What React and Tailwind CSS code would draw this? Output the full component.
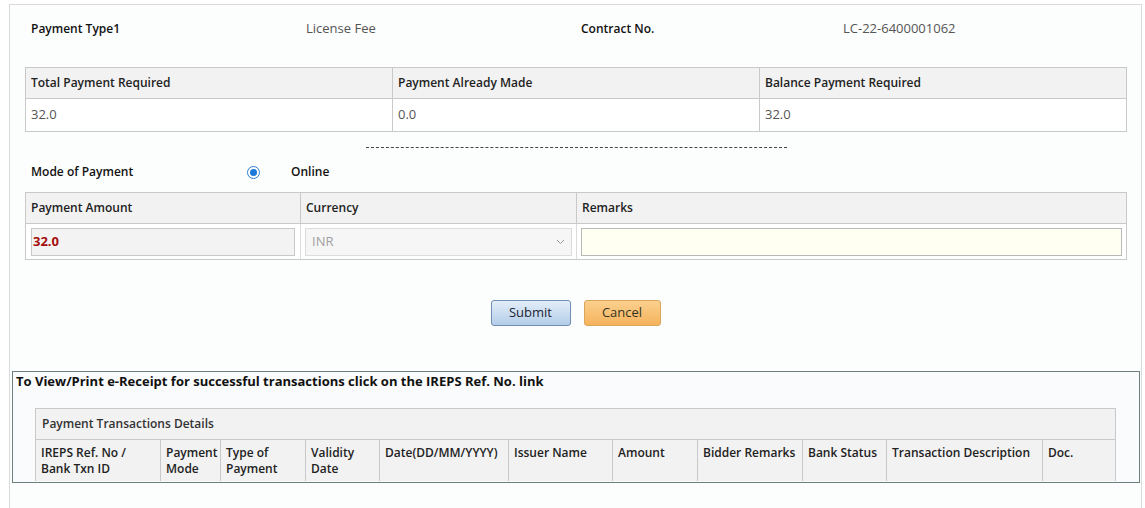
import React from 'react';

const font = { fontFamily: '"Open Sans", "Noto Sans", Arial, sans-serif' };

const txnCols = [
  { label: ['IREPS Ref. No /', 'Bank Txn ID'], w: 'w-[125px]' },
  { label: ['Payment', 'Mode'], w: 'w-[60px]' },
  { label: ['Type of', 'Payment'], w: 'w-[85px]' },
  { label: ['Validity', 'Date'], w: 'w-[74px]' },
  { label: ['Date(DD/MM/YYYY)'], w: 'w-[129px]' },
  { label: ['Issuer Name'], w: 'w-[104px]' },
  { label: ['Amount'], w: 'w-[85px]' },
  { label: ['Bidder Remarks'], w: 'w-[105px]' },
  { label: ['Bank Status'], w: 'w-[84px]' },
  { label: ['Transaction Description'], w: 'w-[156px]' },
  { label: ['Doc.'], w: 'flex-1' },
];

function SummaryTable() {
  const cols = [
    ['Total Payment Required', '32.0'],
    ['Payment Already Made', '0.0'],
    ['Balance Payment Required', '32.0'],
  ];
  return (
    <div className="ml-[15px] w-[1102px] border border-[#c9c9c9] text-[12px]">
      <div className="flex h-[31px] bg-[#f2f2f2] border-b border-[#c9c9c9]">
        {cols.map(([h], i) => (
          <div key={h} className={`flex-1 flex items-center px-[5px] font-semibold text-[#222] ${i < 2 ? 'border-r border-[#c9c9c9]' : ''}`}>
            {h}
          </div>
        ))}
      </div>
      <div className="flex h-[32px] bg-white">
        {cols.map(([h, v], i) => (
          <div key={h} className={`flex-1 flex items-center px-[5px] text-[13px] text-[#555] ${i < 2 ? 'border-r border-[#c9c9c9]' : ''}`}>
            {v}
          </div>
        ))}
      </div>
    </div>
  );
}

function PaymentTable() {
  return (
    <div className="ml-[15px] w-[1102px] border border-[#c9c9c9] text-[12px]">
      <div className="flex h-[31px] bg-[#f2f2f2] border-b border-[#c9c9c9] font-semibold text-[#222]">
        <div className="w-[275px] flex items-center px-[5px] border-r border-[#c9c9c9]">Payment Amount</div>
        <div className="w-[276px] flex items-center px-[5px] border-r border-[#c9c9c9]">Currency</div>
        <div className="flex-1 flex items-center px-[5px]">Remarks</div>
      </div>
      <div className="flex h-[35px] bg-white">
        <div className="w-[275px] flex items-center px-[5px] border-r border-[#dcdcdc]">
          <div className="w-full h-[28px] border border-[#c9c9c9] bg-[#f3f3f3] flex items-center px-[1px] font-bold text-[#a50d0d] text-[13px]">
            32.0
          </div>
        </div>
        <div className="w-[276px] flex items-center px-[4px] border-r border-[#dcdcdc]">
          <div className="w-full h-[28px] border border-[#dcdcdc] bg-[#f6f6f6] flex items-center justify-between px-[6px] text-[13px] text-[#a0a0a0]">
            <span>INR</span>
            <svg width="9" height="6" viewBox="0 0 9 6" fill="none">
              <path d="M1 1l3.5 3.5L8 1" stroke="#9a9a9a" strokeWidth="1" />
            </svg>
          </div>
        </div>
        <div className="flex-1 flex items-center px-[4px]">
          <div className="w-full h-[28px] border border-[#b9b9b9] bg-[#fffff2]"></div>
        </div>
      </div>
    </div>
  );
}

function TransactionBox() {
  return (
    <div className="ml-[2px] w-[1128px] h-[112px] border border-[#6d7f7c] bg-[#f9fbfc] text-[12px]">
      <div className="px-[3px] h-[36px] font-bold text-[13px] text-[#111]">
        To View/Print e-Receipt for successful transactions click on the IREPS Ref. No. link
      </div>
      <div className="ml-[22px] w-[1081px] border border-[#c9c9c9] border-b-0 bg-[#f2f2f2]">
        <div className="h-[31px] flex items-center px-[6px] font-semibold text-[#333] border-b border-[#c9c9c9]">
          Payment Transactions Details
        </div>
        <div className="flex h-[41px] font-semibold text-[#222] leading-[16px]">
          {txnCols.map((c, i) => (
            <div key={i} className={`${c.w} shrink-0 px-[5px] pt-[5px] ${i < txnCols.length - 1 ? 'border-r border-[#c9c9c9]' : ''}`}>
              {c.label.map((l) => (
                <div key={l}>{l}</div>
              ))}
            </div>
          ))}
        </div>
      </div>
    </div>
  );
}

export default function App() {
  return (
    <div className="min-h-screen bg-white pt-[4px] pl-[9px]" style={font}>
      <div className="w-[1133px] h-[520px] border-t border-l border-r border-[#dadada] bg-[#fcfdfd]">
        <div className="flex h-[48px] mb-[14px] items-center text-[12px] ml-[15px]">
          <div className="w-[275px] px-[6px] font-semibold text-[#111]">Payment Type1</div>
          <div className="w-[276px] px-[6px] text-[13px] text-[#555]">License Fee</div>
          <div className="w-[267px] px-[5px] font-semibold text-[#111]">Contract No.</div>
          <div className="text-[13px] text-[#555]">LC-22-6400001062</div>
        </div>
        <SummaryTable />
        <div className="ml-[356px] mt-[15px] w-[421px] border-t border-dashed border-[#444]"></div>
        <div className="flex h-[40px] mt-[4px] items-center text-[12px] ml-[15px] font-semibold text-[#111]">
          <div className="w-[222px] px-[6px]">Mode of Payment</div>
          <span className="w-[13px] h-[13px] rounded-full border border-[#2a7fd6] bg-white flex items-center justify-center">
            <span className="w-[7px] h-[7px] rounded-full bg-[#1d78d8]"></span>
          </span>
          <div className="ml-[31px]">Online</div>
        </div>
        <PaymentTable />
        <div className="flex justify-center gap-[13px] mt-[40px] text-[13px]">
          <button className="w-[80px] h-[26px] rounded-[3px] border border-[#6f8fb4] bg-gradient-to-b from-[#e3eef9] to-[#b3cde8] text-[#223]">
            Submit
          </button>
          <button className="w-[77px] h-[26px] rounded-[3px] border border-[#d9a55a] bg-gradient-to-b from-[#fbd08d] to-[#f5b35c] text-[#332]">
            Cancel
          </button>
        </div>
        <div className="mt-[45px]">
          <TransactionBox />
        </div>
      </div>
    </div>
  );
}
